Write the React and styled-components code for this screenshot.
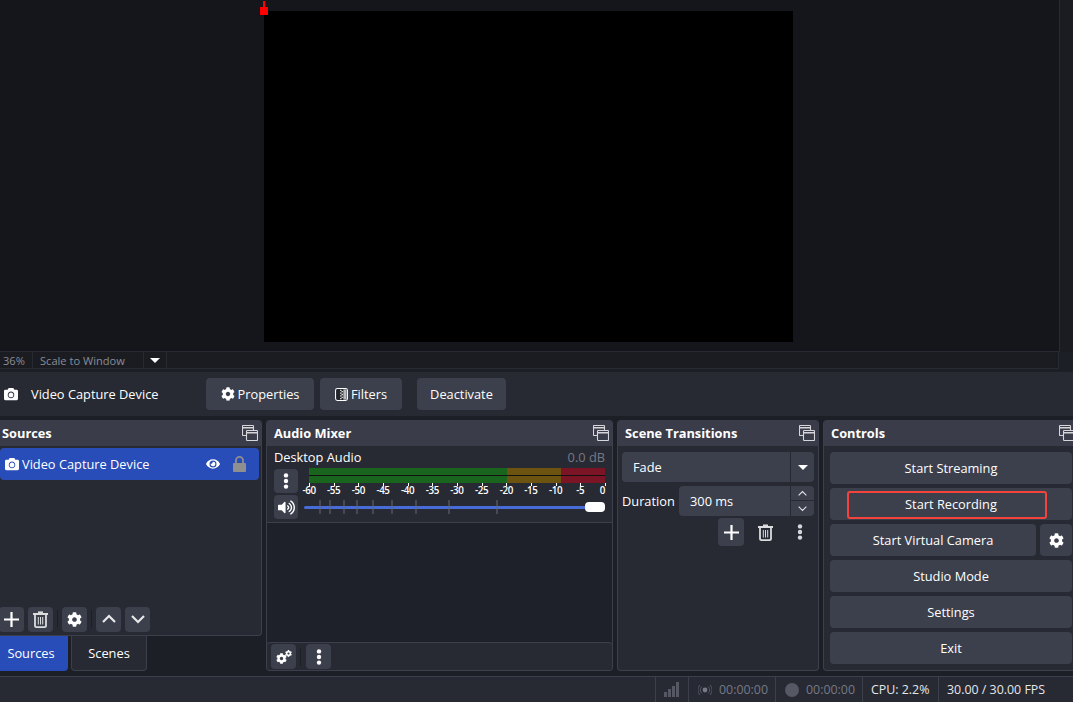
// App.jsx
import React from 'react';
import styled, { createGlobalStyle } from 'styled-components';
import { FaCamera, FaCog, FaEye, FaVolumeUp } from 'react-icons/fa';

const GlobalStyle = createGlobalStyle`
  html, body { margin: 0; padding: 0; background: #1d1f26; }
  * { box-sizing: border-box; }
`;

const Window = styled.div`
  width: 1073px;
  height: 702px;
  overflow: hidden;
  display: flex;
  flex-direction: column;
  background: #1d1f26;
  color: #fff;
  font-family: "Open Sans", "Noto Sans", sans-serif;
  font-size: 12.8px;
`;

const PreviewRow = styled.div`
  height: 352px;
  flex: none;
  display: flex;
  background: #14161b;
`;

const PreviewArea = styled.div`
  flex: 1;
  display: flex;
  justify-content: flex-start;
  padding: 11px 0 10px 264px;
  position: relative;
  border-bottom: 1px solid #272a33;
`;

const Canvas = styled.div`
  width: 529px;
  height: 331px;
  background: #000;
`;

const Handle = styled.div`
  position: absolute;
  left: 260px;
  top: 7px;
  width: 8px;
  height: 8px;
  background: #f00;
  &::before {
    content: "";
    position: absolute;
    left: 3px;
    top: -6px;
    width: 2px;
    height: 6px;
    background: #f00;
  }
`;

const VScroll = styled.div`
  width: 14px;
  flex: none;
  border-left: 1px solid #272a33;
  background: #1a1c22;
`;

const ScaleBar = styled.div`
  height: 17px;
  flex: none;
  display: flex;
  align-items: stretch;
  background: #1a1c22;
  color: #8a8d96;
  font-size: 11.1px;
  border-bottom: 1px solid #272a33;
  border-right: 1px solid #272a33;
  margin-right: 14px;
`;

const ScaleCell = styled.div`
  display: flex;
  align-items: center;
  width: ${(p) => p.$w}px;
  padding-left: ${(p) => p.$pad}px;
  border-right: 1px solid #272a33;
`;

const Arrow = styled.span`
  width: 0;
  height: 0;
  border-left: 5px solid transparent;
  border-right: 5px solid transparent;
  border-top: 5px solid #fff;
`;

const ContextBar = styled.div`
  height: 44px;
  flex: none;
  margin-top: 3px;
  display: flex;
  align-items: center;
  padding: 0 0 0 4px;
  background: #272a33;
`;

const ContextLabel = styled.span`
  margin-left: 13px;
  width: 175px;
`;

const Button = styled.button`
  height: 32px;
  border: none;
  border-radius: 4px;
  background: #3c404d;
  color: #fff;
  font: inherit;
  padding: 0;
  display: flex;
  align-items: center;
  justify-content: center;
  flex: none;
  width: ${(p) => (p.$w ? `${p.$w}px` : 'auto')};
  margin-left: ${(p) => p.$ml || 0}px;
  gap: 3px;
  position: relative;
`;

const Docks = styled.div`
  display: flex;
  gap: 4px;
  height: 251px;
  margin: 4px 0 0 -6px;
  flex: none;
`;

const DockColumn = styled.div`
  width: 268px;
  flex: none;
  display: flex;
  flex-direction: column;
`;

const Dock = styled.section`
  width: ${(p) => (p.$w ? `${p.$w}px` : 'auto')};
  flex: ${(p) => (p.$grow ? 1 : 'none')};
  min-height: 0;
  display: flex;
  flex-direction: column;
  background: #272a33;
  border: 1px solid #3c404d;
  border-top: none;
  border-radius: 4px;
  overflow: hidden;
`;

const DockTitle = styled.header`
  height: 26px;
  flex: none;
  display: flex;
  align-items: center;
  justify-content: space-between;
  padding: 0 3px 0 7px;
  background: #3a3d49;
  font-weight: 700;
  font-size: 12.8px;
`;

const FloatGlyph = () => (
  <svg width="16" height="16" viewBox="0 0 16 16" fill="none" stroke="#d6d6da" strokeWidth="1.1">
    <rect x="0.5" y="0.5" width="11" height="10" rx="0.8" />
    <path d="M1 2.8h10" strokeWidth="1.4" />
    <rect x="4.5" y="5.5" width="11" height="10" rx="0.8" fill="#3a3d49" />
    <path d="M5 7.8h10" strokeWidth="1.4" />
  </svg>
);

const SourceList = styled.div`
  flex: 1;
  padding: 2px 2px 0 5px;
`;

const SourceRow = styled.div`
  height: 32px;
  display: flex;
  align-items: center;
  background: #284cb8;
  border-radius: 4px;
  padding-left: 5px;
  svg { flex: none; }
`;

const SourceName = styled.span`
  margin-left: 3px;
  width: 184px;
`;

const LockSlot = styled.span`
  margin-left: 13px;
  display: flex;
`;

const DockToolbar = styled.div`
  height: 28px;
  flex: none;
  display: flex;
  align-items: center;
  gap: 4px;
  padding-left: 4px;
  margin-bottom: ${(p) => p.$mb || 0}px;
  border-top: ${(p) => (p.$line ? '1px solid #3c404d' : 'none')};
  border-radius: ${(p) => (p.$line ? '4px 4px 0 0' : 0)};
  background: #272a33;
`;

const ToolButton = styled(Button)`
  width: ${(p) => p.$w || 25}px;
  height: ${(p) => p.$h || 25}px;
  color: #fff;
`;

const PlainTool = styled(ToolButton)`
  background: transparent;
`;

const ToolSep = styled.div`
  width: 1px;
  height: 18px;
  background: #1d1f26;
  margin-right: ${(p) => p.$mr || 0}px;
`;

const Tabs = styled.div`
  height: 35px;
  flex: none;
  display: flex;
  gap: 3px;
`;

const Tab = styled.div`
  width: ${(p) => p.$w}px;
  display: flex;
  align-items: center;
  justify-content: center;
  background: ${(p) => (p.$active ? '#284cb8' : '#272a33')};
  border: 1px solid ${(p) => (p.$active ? '#284cb8' : '#3c404d')};
  border-top: none;
  border-radius: 0 0 4px 4px;
`;

const MixerBody = styled.div`
  flex: 1;
  background: #1f212a;
  display: flex;
  flex-direction: column;
`;

const Strip = styled.div`
  height: 77px;
  flex: none;
  background: #272a33;
  border-bottom: 1px solid #3c404d;
  padding: 1px 7px 0 7px;
`;

const StripHead = styled.div`
  height: 19px;
  display: flex;
  align-items: center;
  justify-content: space-between;
`;

const DbValue = styled.span`
  color: #767986;
`;

const StripBody = styled.div`
  display: grid;
  grid-template-columns: 24px 1fr;
  column-gap: 6px;
  margin-top: 2px;
`;

const StripButtons = styled.div`
  display: flex;
  flex-direction: column;
  gap: 2px;
  margin-top: 1px;
`;

const StripButton = styled(Button)`
  width: 24px;
  height: 24px;
`;

const MeterWrap = styled.div`
  display: flex;
  flex-direction: column;
`;

const Meter = styled.div`
  height: 15px;
  margin-left: 5px;
  display: grid;
  grid-template-rows: 7px 7px;
  row-gap: 1px;
  background: #111;
`;

const MeterChannel = styled.div`
  display: grid;
  grid-template-columns: 198px 54px 44px;
  div:nth-child(1) { background: #19651e; }
  div:nth-child(2) { background: #6c5410; }
  div:nth-child(3) { background: #7b1425; }
`;

const Scale = styled.div`
  height: 14px;
  margin-left: 5px;
  display: flex;
  justify-content: space-between;
  font-size: 9.8px;
  font-weight: 600;
  letter-spacing: -0.4px;
`;

const ScaleMark = styled.span`
  width: 0;
  display: flex;
  justify-content: ${(p) => (p.$end ? 'flex-end' : 'center')};
  white-space: nowrap;
  position: relative;
  line-height: 13px;
  padding-top: 1px;
  &::before {
    content: "";
    position: absolute;
    left: 0;
    top: 0;
    width: 1px;
    height: 3px;
    background: #fff;
  }
`;

const Fader = styled.div`
  position: relative;
  height: 14px;
  margin-top: 3px;
`;

const FaderTrack = styled.div`
  position: absolute;
  left: 0;
  right: 0;
  top: 6px;
  height: 3px;
  border-radius: 2px;
  background: #476bd7;
`;

const FaderTicks = styled.svg`
  position: absolute;
  left: 0;
  top: 0;
`;

const FaderThumb = styled.div`
  position: absolute;
  right: 0;
  top: 2px;
  width: 20px;
  height: 10px;
  border-radius: 4px;
  background: #fff;
`;

const Spacer = styled.div`
  flex: 1;
`;

const TransitionBody = styled.div`
  flex: 1;
  padding: 6px 4px 0;
  display: flex;
  flex-direction: column;
`;

const Combo = styled.div`
  height: 30px;
  display: flex;
  background: #3c404d;
  border-radius: 4px;
  flex: none;
  width: ${(p) => (p.$w ? `${p.$w}px` : 'auto')};
`;

const ComboText = styled.div`
  flex: 1;
  display: flex;
  align-items: center;
  padding-left: ${(p) => p.$pad}px;
  border-right: 1px solid #272a33;
`;

const ComboArrow = styled.div`
  width: 23px;
  display: flex;
  align-items: center;
  justify-content: center;
`;

const SpinStack = styled.div`
  width: 23px;
  display: grid;
  grid-template-rows: 1fr 1fr;
  div { display: flex; align-items: center; justify-content: center; }
  div:first-child { border-bottom: 1px solid #272a33; }
`;

const DurationRow = styled.div`
  display: flex;
  align-items: center;
  justify-content: space-between;
  margin-top: 4px;
`;

const TransitionTools = styled.div`
  display: flex;
  align-items: center;
  margin-top: 2px;
  padding-left: 96px;
  gap: 9px;
  height: 28px;
`;

const ControlsBody = styled.div`
  flex: 1;
  padding: 6px 0 0 6px;
  display: flex;
  flex-direction: column;
  gap: 4px;
`;

const ControlRow = styled.div`
  display: flex;
  gap: 4px;
`;

const ControlButton = styled(Button)`
  width: ${(p) => p.$w}px;
`;

const Highlight = styled.span`
  position: absolute;
  left: 17px;
  top: 3px;
  width: 200px;
  height: 28px;
  border: 2px solid #f4433c;
  border-radius: 3px;
`;

const GearPair = styled.span`
  position: relative;
  width: 16px;
  height: 14px;
  display: block;
  svg { position: absolute; }
  svg:first-child { left: 0; bottom: 0; }
  svg:last-child { right: 0; top: 0; }
`;

const StatusBar = styled.footer`
  flex: 1;
  margin-top: 5px;
  display: flex;
  justify-content: flex-end;
  background: #272a33;
  border-top: 1px solid #3c404d;
`;

const StatusCell = styled.div`
  width: ${(p) => p.$w}px;
  display: flex;
  align-items: center;
  gap: 7px;
  padding-left: ${(p) => p.$pad || 8}px;
  border-left: 1px solid #3c404d;
  color: ${(p) => (p.$dim ? '#767986' : '#e6e6ea')};
  font-size: 12.4px;
`;

const RecordDot = styled.span`
  width: 14px;
  height: 14px;
  border-radius: 50%;
  background: #565964;
`;

const SCALE = ['-60', '-55', '-50', '-45', '-40', '-35', '-30', '-25', '-20', '-15', '-10', '-5', '0'];
const FADER_TICKS = [16, 26, 40, 53, 69, 88, 112, 145, 193];

const Chevron = ({ up, size = 14, width = 2.2 }) => (
  <svg width={size} height={size} viewBox="0 0 14 14" fill="none" stroke="#e8e8ea" strokeWidth={width}>
    <path d={up ? 'M1 10l6-6 6 6' : 'M1 4l6 6 6-6'} />
  </svg>
);

const Plus = () => (
  <svg width="15" height="15" viewBox="0 0 15 15" stroke="#fff" strokeWidth="2.2">
    <path d="M7.5 0v15M0 7.5h15" />
  </svg>
);

const Trash = () => (
  <svg width="15" height="17" viewBox="0 0 15 17" fill="none" stroke="#dcdcdf">
    <path d="M5 1.2h5" strokeWidth="1.6" />
    <path d="M0 3h15" strokeWidth="2" />
    <path d="M2 4v10.5c0 1 .6 1.6 1.6 1.6h7.8c1 0 1.6-.6 1.6-1.6V4" strokeWidth="1.8" />
    <path d="M5.3 6v7.5M7.5 6v7.5M9.7 6v7.5" strokeWidth="1" />
  </svg>
);

const Dots = ({ color = '#fff' }) => (
  <svg width="6" height="16" viewBox="0 0 6 16" fill={color}>
    <circle cx="3" cy="2.4" r="2.2" />
    <circle cx="3" cy="8" r="2.2" />
    <circle cx="3" cy="13.6" r="2.2" />
  </svg>
);

const Lock = () => (
  <svg width="13" height="16" viewBox="0 0 13 16" fill="#8f8f8f">
    <path d="M3 7V4.4a3.5 3.5 0 0 1 7 0V7" fill="none" stroke="#8f8f8f" strokeWidth="1.8" />
    <rect x="0" y="7" width="13" height="9" rx="1" />
  </svg>
);

const SignalBars = () => (
  <svg width="16" height="15" viewBox="0 0 16 15" fill="#565964">
    <rect x="0" y="10" width="3" height="5" />
    <rect x="4" y="7" width="3" height="8" />
    <rect x="8" y="4" width="3" height="11" />
    <rect x="12" y="0" width="3" height="15" />
  </svg>
);

const StreamGlyph = () => (
  <svg width="14" height="12" viewBox="0 0 14 12" fill="none" stroke="#565964" strokeWidth="1">
    <circle cx="7" cy="6" r="2.4" fill="#767986" stroke="none" />
    <path d="M3.8 2.6a5 5 0 0 0 0 6.8M10.2 2.6a5 5 0 0 1 0 6.8M1.8 1a7.5 7.5 0 0 0 0 10M12.2 1a7.5 7.5 0 0 1 0 10" />
  </svg>
);

const FiltersGlyph = () => (
  <svg width="13" height="13" viewBox="0 0 14 14">
    <rect x="0.6" y="0.6" width="12.8" height="12.8" rx="2" fill="#23252c" stroke="#fff" strokeWidth="1.1" />
    <rect x="9" y="1.5" width="3.5" height="11" fill="#b9b9bd" />
    <path d="M5.5 2.5h1.5M7 4h1.5M5.5 5.5h1.5M7 7h1.5M5.5 8.5h1.5M7 10h1.5M5.5 11.5h1.5" stroke="#e6e6e6" strokeWidth="1.4" />
  </svg>
);

const App = () => (
  <Window>
    <GlobalStyle />
    <PreviewRow>
      <PreviewArea>
        <Canvas />
        <Handle />
      </PreviewArea>
      <VScroll />
    </PreviewRow>
    <ScaleBar>
      <ScaleCell $w={33} $pad={3}>36%</ScaleCell>
      <ScaleCell $w={111} $pad={7}>Scale to Window</ScaleCell>
      <ScaleCell $w={23} $pad={6}><Arrow /></ScaleCell>
    </ScaleBar>

    <ContextBar>
      <FaCamera size={14} />
      <ContextLabel>Video Capture Device</ContextLabel>
      <Button $w={108}><FaCog size={14} />Properties</Button>
      <Button $w={82} $ml={6}><FiltersGlyph />Filters</Button>
      <Button $w={89} $ml={15}>Deactivate</Button>
    </ContextBar>

    <Docks>
      <DockColumn>
        <Dock $grow>
          <DockTitle>Sources<FloatGlyph /></DockTitle>
          <SourceList>
            <SourceRow>
              <FaCamera size={14} />
              <SourceName>Video Capture Device</SourceName>
              <FaEye size={14} />
              <LockSlot><Lock /></LockSlot>
            </SourceRow>
          </SourceList>
          <DockToolbar $mb={2}>
            <ToolButton><Plus /></ToolButton>
            <ToolButton><Trash /></ToolButton>
            <ToolSep />
            <ToolButton><FaCog size={15} /></ToolButton>
            <ToolSep />
            <ToolButton><Chevron up /></ToolButton>
            <ToolButton><Chevron /></ToolButton>
          </DockToolbar>
        </Dock>
        <Tabs>
          <Tab $w={74} $active>Sources</Tab>
          <Tab $w={76}>Scenes</Tab>
        </Tabs>
      </DockColumn>

      <Dock $w={347}>
        <DockTitle>Audio Mixer<FloatGlyph /></DockTitle>
        <MixerBody>
          <Strip>
            <StripHead>Desktop Audio<DbValue>0.0 dB</DbValue></StripHead>
            <StripBody>
              <StripButtons>
                <StripButton><Dots /></StripButton>
                <StripButton><FaVolumeUp size={17} /></StripButton>
              </StripButtons>
              <MeterWrap>
                <Meter>
                  <MeterChannel><div /><div /><div /></MeterChannel>
                  <MeterChannel><div /><div /><div /></MeterChannel>
                </Meter>
                <Scale>
                  {SCALE.map((s) => <ScaleMark key={s} $end={s === '0'}>{s}</ScaleMark>)}
                </Scale>
                <Fader>
                  <FaderTrack />
                  <FaderTicks width="286" height="14">
                    {FADER_TICKS.map((x) => (
                      <line key={x} x1={x} x2={x} y1="0" y2="14" stroke="#666976" />
                    ))}
                  </FaderTicks>
                  <FaderThumb />
                </Fader>
              </MeterWrap>
            </StripBody>
          </Strip>
          <Spacer />
        </MixerBody>
        <DockToolbar $line>
          <ToolButton>
            <GearPair>
              <FaCog size={11} />
              <FaCog size={7} />
            </GearPair>
          </ToolButton>
          <ToolSep $mr={1} />
          <ToolButton><Dots /></ToolButton>
        </DockToolbar>
      </Dock>

      <Dock $w={202}>
        <DockTitle>Scene Transitions<FloatGlyph /></DockTitle>
        <TransitionBody>
          <Combo>
            <ComboText $pad={11}>Fade</ComboText>
            <ComboArrow><Arrow /></ComboArrow>
          </Combo>
          <DurationRow>
            Duration
            <Combo $w={135}>
              <ComboText $pad={11}>300 ms</ComboText>
              <SpinStack>
                <div><Chevron up size={9} width={1.6} /></div>
                <div><Chevron size={9} width={1.6} /></div>
              </SpinStack>
            </Combo>
          </DurationRow>
          <TransitionTools>
            <ToolButton $w={26} $h={28}><Plus /></ToolButton>
            <PlainTool><Trash /></PlainTool>
            <PlainTool><Dots color="#d8d8dc" /></PlainTool>
          </TransitionTools>
        </TransitionBody>
      </Dock>

      <Dock $w={256}>
        <DockTitle>Controls<FloatGlyph /></DockTitle>
        <ControlsBody>
          <ControlRow><ControlButton $w={242}>Start Streaming</ControlButton></ControlRow>
          <ControlRow>
            <ControlButton $w={242}>Start Recording<Highlight /></ControlButton>
          </ControlRow>
          <ControlRow>
            <ControlButton $w={206}>Start Virtual Camera</ControlButton>
            <ControlButton $w={32}><FaCog size={15} /></ControlButton>
          </ControlRow>
          <ControlRow><ControlButton $w={242}>Studio Mode</ControlButton></ControlRow>
          <ControlRow><ControlButton $w={242}>Settings</ControlButton></ControlRow>
          <ControlRow><ControlButton $w={242}>Exit</ControlButton></ControlRow>
        </ControlsBody>
      </Dock>
    </Docks>

    <StatusBar>
      <StatusCell $w={33}><SignalBars /></StatusCell>
      <StatusCell $w={87} $dim $pad={9}><StreamGlyph />00:00:00</StatusCell>
      <StatusCell $w={87} $dim $pad={9}><RecordDot />00:00:00</StatusCell>
      <StatusCell $w={76}>CPU: 2.2%</StatusCell>
      <StatusCell $w={135}>30.00 / 30.00 FPS</StatusCell>
    </StatusBar>
  </Window>
);

export default App;
